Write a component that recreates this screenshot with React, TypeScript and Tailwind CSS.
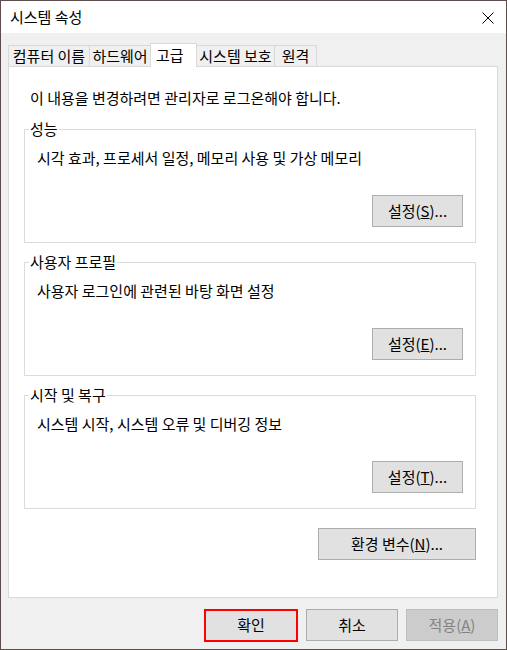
import React from 'react'

const font = { fontFamily: '"Noto Sans CJK KR", "Noto Sans", sans-serif' }

function Btn({ children, className = '' }: { children: React.ReactNode; className?: string }) {
  return (
    <div
      className={`h-[32px] flex items-center justify-center border border-[#adadad] bg-[#e1e1e1] text-[15px] text-black ${className}`}
    >
      {children}
    </div>
  )
}

function Group({ label, desc, btn }: { label: string; desc: string; btn: React.ReactNode }) {
  return (
    <div className="relative ml-[15px] w-[452px] h-[114px] border border-[#dcdcdc] flex flex-col px-[12px] pt-[18px]">
      <span className="absolute -top-[11px] left-[4px] px-[1px] bg-white leading-[20px] text-[15px]">{label}</span>
      <p className="leading-[20px] text-[15px]">{desc}</p>
      <Btn className="mt-auto mb-[15px] self-end w-[91px]">{btn}</Btn>
    </div>
  )
}

const tabs = [
  { label: '컴퓨터 이름', w: 'w-[82px]' },
  { label: '하드웨어', w: 'w-[62px]' },
  { label: '고급', w: 'w-[47px]', active: true },
  { label: '시스템 보호', w: 'w-[79px]' },
  { label: '원격', w: 'w-[43px]' },
]

export default function App() {
  return (
    <div className="w-[507px] h-[650px] border border-[#5d4c4c] flex flex-col text-black" style={font}>
      {/* title bar */}
      <div className="h-[32px] bg-white flex items-center justify-between pl-[9px] pr-[12px]">
        <span className="text-[15px] leading-[20px]">시스템 속성</span>
        <svg width="12" height="12" viewBox="0 0 12 12" className="mt-[1px]">
          <path d="M0.5 0.5 L11.5 11.5 M11.5 0.5 L0.5 11.5" stroke="#000" strokeWidth="1" fill="none" />
        </svg>
      </div>

      {/* client area */}
      <div className="flex-1 bg-[#f0f0f0] pl-[7px] pr-[8px] pt-[10px] flex flex-col">
        {/* tabs */}
        <div className="flex items-end h-[24px] -mb-[1px] relative z-10">
          {tabs.map((t) =>
            t.active ? (
              <div
                key={t.label}
                className={`${t.w} h-[24px] bg-white border border-b-0 border-[#d9d9d9] -ml-px flex items-start pt-[1px] pl-[5px] text-[15px] leading-[20px]`}
              >
                {t.label}
              </div>
            ) : (
              <div
                key={t.label}
                className={`${t.w} h-[22px] bg-[#f0f0f0] border border-[#d9d9d9] -ml-px first:ml-0 flex items-center justify-center text-[15px] leading-[20px]`}
              >
                {t.label}
              </div>
            )
          )}
        </div>

        {/* tab panel */}
        <div className="w-[490px] h-[532px] bg-white border border-[#d9d9d9] flex flex-col pt-[21px]">
          <p className="pl-[21px] text-[15px] leading-[20px]">이 내용을 변경하려면 관리자로 로그온해야 합니다.</p>
          <div className="mt-[21px] flex flex-col gap-[19px]">
            <Group
              label="성능"
              desc="시각 효과, 프로세서 일정, 메모리 사용 및 가상 메모리"
              btn={<span>설정(<u>S</u>)...</span>}
            />
            <Group
              label="사용자 프로필"
              desc="사용자 로그인에 관련된 바탕 화면 설정"
              btn={<span>설정(<u>E</u>)...</span>}
            />
            <Group
              label="시작 및 복구"
              desc="시스템 시작, 시스템 오류 및 디버깅 정보"
              btn={<span>설정(<u>T</u>)...</span>}
            />
          </div>
          <Btn className="mt-[19px] self-end mr-[21px] w-[158px]">
            <span>환경 변수(<u>N</u>)...</span>
          </Btn>
        </div>

        {/* footer buttons */}
        <div className="mt-[11px] flex justify-end gap-[8px]">
          <div className="w-[94px] h-[33px] border-2 border-[#ff0000] bg-[#e1e1e1] flex items-center justify-center text-[15px]">
            확인
          </div>
          <Btn className="w-[92px] h-[32px]">취소</Btn>
          <div className="w-[92px] h-[32px] border border-[#bfbfbf] bg-[#cccccc] flex items-center justify-center text-[15px] text-[#838383]">
            <span>적용(<u>A</u>)</span>
          </div>
        </div>
      </div>
    </div>
  )
}
